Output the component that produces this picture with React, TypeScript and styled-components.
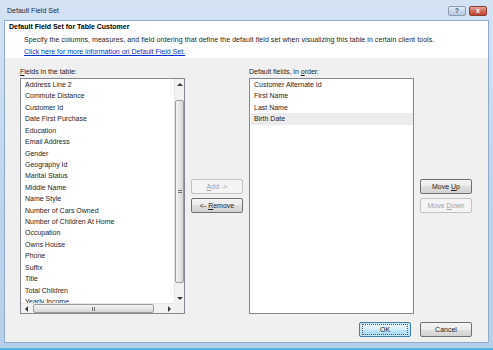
import React from 'react';
import styled, { createGlobalStyle, css } from 'styled-components';

const GlobalStyle = createGlobalStyle`
  html, body {
    margin: 0;
    padding: 0;
  }
  body {
    width: 493px;
    height: 350px;
    overflow: hidden;
    background: #c4d9ef;
    font-family: "Liberation Sans", Arial, sans-serif;
    font-size: 7px;
    color: #1e1e1e;
  }
`;

const fields = [
  'Address Line 2',
  'Commute Distance',
  'Customer Id',
  'Date First Purchase',
  'Education',
  'Email Address',
  'Gender',
  'Geography Id',
  'Marital Status',
  'Middle Name',
  'Name Style',
  'Number of Cars Owned',
  'Number of Children At Home',
  'Occupation',
  'Owns House',
  'Phone',
  'Suffix',
  'Title',
  'Total Children',
  'Yearly Income',
];

const defaults = ['Customer Alternate Id', 'First Name', 'Last Name', 'Birth Date'];

const Arrow: React.FC<{ dir: 'up' | 'down' | 'left' | 'right' }> = ({ dir }) => {
  const pts = {
    up: '1,4 4,1 7,4',
    down: '1,1 4,4 7,1',
    left: '4,1 1,4 4,7',
    right: '1,1 4,4 1,7',
  }[dir];
  const vertical = dir === 'up' || dir === 'down';
  return (
    <svg width={vertical ? 8 : 5} height={vertical ? 5 : 8} viewBox={vertical ? '0 0 8 5' : '0 0 5 8'}>
      <polygon points={pts} fill="#3a3a3a" />
    </svg>
  );
};

const App: React.FC = () => {
  return (
    <>
      <GlobalStyle />
      <Window>
        <TitleBar>
          <TitleText>Default Field Set</TitleText>
          <CaptionButtons>
            <HelpButton>?</HelpButton>
            <CloseButton>x</CloseButton>
          </CaptionButtons>
        </TitleBar>
        <Client>
          <Header>
            <HeaderTitle>Default Field Set for Table Customer</HeaderTitle>
            <HeaderText>
              Specify the columns, measures, and field ordering that define the default field set when visualizing this table in certain client tools.
            </HeaderText>
            <HeaderLink href="#">Click here for more information on Default Field Set.</HeaderLink>
          </Header>
          <Body>
            <MainRow>
              <ListPane>
                <Label><u>F</u>ields in the table:</Label>
                <ListBox $scroll>
                  <ListContent>
                    {fields.map((f) => (
                      <Item key={f}>{f}</Item>
                    ))}
                  </ListContent>
                  <VScroll>
                    <ArrowCell><Arrow dir="up" /></ArrowCell>
                    <VTrack>
                      <VThumb>
                        <Grip $vertical />
                      </VThumb>
                    </VTrack>
                    <ArrowCell><Arrow dir="down" /></ArrowCell>
                  </VScroll>
                  <HScroll>
                    <HArrowCell><Arrow dir="left" /></HArrowCell>
                    <HTrack>
                      <HThumb>
                        <Grip />
                      </HThumb>
                    </HTrack>
                    <HArrowCell><Arrow dir="right" /></HArrowCell>
                  </HScroll>
                  <Corner />
                </ListBox>
              </ListPane>
              <ButtonStack>
                <Button disabled>
                  <Caption><u>A</u>dd -&gt;</Caption>
                </Button>
                <Button>
                  <Caption>&lt;- <u>R</u>emove</Caption>
                </Button>
              </ButtonStack>
              <ListPane $offset={6}>
                <Label>Default fields, in <u>o</u>rder:</Label>
                <ListBox>
                  <ListContent>
                    {defaults.map((f, i) => (
                      <Item key={f} $selected={i === 3}>
                        {f}
                      </Item>
                    ))}
                  </ListContent>
                </ListBox>
              </ListPane>
              <ButtonStack>
                <Button>
                  <Caption>Move <u>U</u>p</Caption>
                </Button>
                <Button disabled>
                  <Caption>Move <u>D</u>own</Caption>
                </Button>
              </ButtonStack>
            </MainRow>
            <Footer>
              <DefaultButton>
                <FocusRect>OK</FocusRect>
              </DefaultButton>
              <Button>
                <Caption>Cancel</Caption>
              </Button>
            </Footer>
          </Body>
        </Client>
      </Window>
    </>
  );
};

const Window = styled.div`
  box-sizing: border-box;
  width: 493px;
  height: 350px;
  display: flex;
  flex-direction: column;
  padding: 0 4px 5px 4px;
  background: linear-gradient(#d3e3f4, #bcd4ee 60%, #b6d0ec);
  border-bottom: 2px solid #5aaee0;
`;

const TitleBar = styled.div`
  height: 20px;
  display: flex;
  align-items: center;
  justify-content: space-between;
  padding: 1px 0 0 3px;
  box-sizing: border-box;
`;

const TitleText = styled.div`
  font-size: 7px;
  color: #1b2a3c;
`;

const CaptionButtons = styled.div`
  display: flex;
  gap: 3px;
  margin-right: 2px;
`;

const captionBase = css`
  width: 18px;
  height: 10px;
  border-radius: 2px;
  display: flex;
  align-items: center;
  justify-content: center;
  font-size: 7px;
  font-weight: bold;
  line-height: 1;
  box-sizing: border-box;
`;

const HelpButton = styled.div`
  ${captionBase};
  border: 1px solid #8c9db3;
  background: linear-gradient(#e4edf7, #c9d8ea 50%, #b9cbe1);
  color: #4c5d72;
`;

const CloseButton = styled.div`
  ${captionBase};
  border: 1px solid #8b3b32;
  background: linear-gradient(#e7a597, #d16a58 50%, #c1432f);
  color: #ffffff;
`;

const Client = styled.div`
  flex: 1;
  display: flex;
  flex-direction: column;
  background: #f0f0f0;
  border: 1px solid #8fabcb;
`;

const Header = styled.div`
  box-sizing: border-box;
  height: 37px;
  background: #ffffff;
  padding: 0 0 0 4px;
`;

const HeaderTitle = styled.div`
  font-weight: bold;
  line-height: 11px;
  color: #000;
`;

const HeaderText = styled.div`
  line-height: 11px;
  margin-top: 1.5px;
  padding-left: 15px;
  color: #1e1e1e;
  white-space: nowrap;
  letter-spacing: 0.07px;
`;

const HeaderLink = styled.a`
  display: block;
  line-height: 11px;
  margin-top: 1px;
  margin-left: 15px;
  color: #0033cc;
  text-decoration: underline;
  width: max-content;
`;

const Body = styled.div`
  flex: 1;
  display: flex;
  flex-direction: column;
  padding: 8px 16px 0 15px;
`;

const MainRow = styled.div`
  display: flex;
  align-items: stretch;
`;

const ListPane = styled.div<{ $offset?: number }>`
  display: flex;
  flex-direction: column;
  width: 165px;
  margin-left: ${(p) => p.$offset ?? 0}px;
`;

const Label = styled.div`
  line-height: 11px;
  margin-bottom: 1px;
  white-space: nowrap;
`;

const ListBox = styled.div<{ $scroll?: boolean }>`
  box-sizing: border-box;
  height: 236px;
  border: 1px solid #828790;
  background: #ffffff;
  display: grid;
  grid-template-columns: ${(p) => (p.$scroll ? '1fr 10px' : '1fr')};
  grid-template-rows: ${(p) => (p.$scroll ? '1fr 10px' : '1fr')};
  overflow: hidden;
`;

const ListContent = styled.div`
  overflow: hidden;
  min-width: 0;
  min-height: 0;
`;

const Item = styled.div<{ $selected?: boolean }>`
  height: 11.43px;
  line-height: 11.43px;
  padding-left: 3px;
  margin-left: 1px;
  white-space: nowrap;
  background: ${(p) => (p.$selected ? '#ececec' : 'transparent')};
`;

const VScroll = styled.div`
  display: flex;
  flex-direction: column;
  background: #f2f2f2;
  border-left: 1px solid #e6e6e6;
`;

const ArrowCell = styled.div`
  height: 10px;
  display: flex;
  align-items: center;
  justify-content: center;
`;

const VTrack = styled.div`
  flex: 1;
  display: flex;
  flex-direction: column;
  padding: 11px 0 10px;
`;

const VThumb = styled.div`
  flex: 1;
  box-sizing: border-box;
  border: 1px solid #9b9b9b;
  border-radius: 2px;
  background: linear-gradient(to right, #f4f4f4, #e6e6e6 50%, #d6d6d6);
  display: flex;
  align-items: center;
  justify-content: center;
`;

const Grip = styled.div<{ $vertical?: boolean }>`
  width: 4px;
  height: 4px;
  background: ${(p) =>
    p.$vertical
      ? 'repeating-linear-gradient(#6f6f6f 0 1px, transparent 1px 2px)'
      : 'repeating-linear-gradient(to right, #6f6f6f 0 1px, transparent 1px 2px)'};
`;

const HScroll = styled.div`
  display: flex;
  background: #f2f2f2;
  border-top: 1px solid #e6e6e6;
`;

const HArrowCell = styled.div`
  width: 10px;
  display: flex;
  align-items: center;
  justify-content: center;
`;

const HTrack = styled.div`
  flex: 1;
  display: flex;
  padding: 0 9px 0 2px;
`;

const HThumb = styled.div`
  width: 121px;
  box-sizing: border-box;
  border: 1px solid #9b9b9b;
  border-radius: 2px;
  background: linear-gradient(#f4f4f4, #e6e6e6 50%, #d6d6d6);
  display: flex;
  align-items: center;
  justify-content: center;
`;

const Corner = styled.div`
  background: #f0f0f0;
`;

const ButtonStack = styled.div`
  display: flex;
  flex-direction: column;
  justify-content: center;
  gap: 4px;
  width: 52px;
  margin-left: 6px;
  padding-top: 12px;
`;

const buttonBase = css`
  box-sizing: border-box;
  height: 15px;
  width: 52px;
  padding: 0;
  border-radius: 2px;
  font-family: "Liberation Sans", Arial, sans-serif;
  font-size: 7px;
  display: flex;
  align-items: center;
  justify-content: center;
`;

const Button = styled.button`
  ${buttonBase};
  border: 1px solid #707070;
  background: linear-gradient(#f4f4f4, #ececec 50%, #dfdfdf 50%, #d2d2d2);
  color: #1e1e1e;

  &:disabled {
    border-color: #c2c2c2;
    background: #f4f4f4;
    color: #a3a3a3;
  }
`;

const Caption = styled.span`
  white-space: pre;
`;

const DefaultButton = styled.button`
  ${buttonBase};
  border: 1px solid #3c7fb1;
  background: linear-gradient(#eaf6fd, #d9f0fc 50%, #bee6fd 50%, #a7d9f5);
  box-shadow: inset 0 0 0 1px #c8e8f8;
  color: #1e1e1e;
`;

const FocusRect = styled.span`
  box-sizing: border-box;
  width: 46px;
  height: 11px;
  border: 1px dotted #555;
  display: flex;
  align-items: center;
  justify-content: center;
`;

const Footer = styled.div`
  display: flex;
  justify-content: flex-end;
  gap: 9px;
  margin-top: 8px;
`;

export default App;
